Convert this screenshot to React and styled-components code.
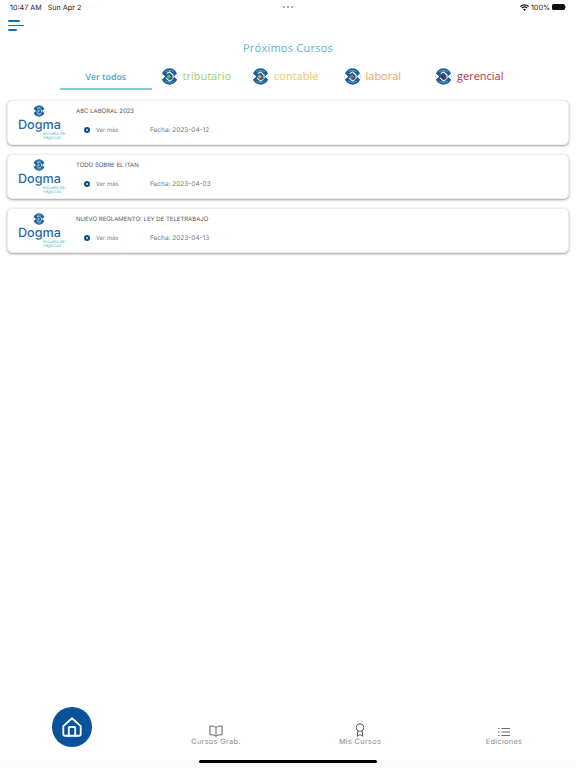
import styled, { createGlobalStyle } from "styled-components";

const courses = [
  { title: "ABC LABORAL 2023", date: "2023-04-12" },
  { title: "TODO SOBRE EL ITAN", date: "2023-04-03" },
  { title: "NUEVO REGLAMENTO: LEY DE TELETRABAJO", date: "2023-04-13" },
];

const brands = [
  { name: "tributario", color: "#a4cf6d", accent: "#7db94a" },
  { name: "contable", color: "#f2c45f", accent: "#e8a93a" },
  { name: "laboral", color: "#f0a365", accent: "#c9663a" },
  { name: "gerencial", color: "#b5334a", accent: "#7e1a3c" },
];

const GlobalStyle = createGlobalStyle`
  html, body {
    margin: 0;
    padding: 0;
    background: #fff;
    font-family: "Open Sans", "Liberation Sans", sans-serif;
    text-rendering: geometricPrecision;
  }
`;

const Page = styled.div`
  width: 576px;
  height: 768px;
  display: flex;
  flex-direction: column;
  overflow: hidden;
  background: #fff;
`;

const StatusBar = styled.div`
  display: grid;
  grid-template-columns: 1fr auto 1fr;
  align-items: center;
  height: 14px;
  padding: 0 10px;
  font-family: "Inter", sans-serif;
  font-size: 7.2px;
  color: #222;
`;

const StatusLeft = styled.div`
  display: flex;
  gap: 6px;
`;

const Dots = styled.div`
  display: flex;
  gap: 2px;
`;

const Dot = styled.span`
  width: 2px;
  height: 2px;
  border-radius: 50%;
  background: #8a8a8a;
`;

const StatusRight = styled.div`
  display: flex;
  align-items: center;
  justify-content: flex-end;
  gap: 2px;
`;

const Battery = styled.span`
  position: relative;
  width: 13px;
  height: 6px;
  border-radius: 1.5px;
  background: #111;
  margin-right: 1px;

  &::after {
    content: "";
    position: absolute;
    right: -1px;
    top: 2px;
    width: 1px;
    height: 2px;
    background: #999;
  }
`;

const TopBar = styled.div`
  height: 20px;
  padding: 6px 0 0 8px;
  box-sizing: border-box;
`;

const MenuButton = styled.div`
  display: flex;
  flex-direction: column;
  align-items: flex-start;
  gap: 3px;
`;

const MenuLine = styled.span`
  display: block;
  height: 1.5px;
  width: ${(p) => p.$w}px;
  background: #1c6ba6;
  border-radius: 1px;
`;

const Title = styled.h1`
  margin: 8px 0 0;
  height: 14px;
  text-align: center;
  font-size: 11px;
  line-height: 14px;
  font-weight: 400;
  letter-spacing: 0.25px;
  color: #55b6d3;
`;

const Tabs = styled.div`
  display: grid;
  grid-template-columns: repeat(5, 91.5px);
  margin: 8px 0 0 60px;
  height: 26px;
`;

const AllTab = styled.div`
  display: flex;
  align-items: center;
  justify-content: center;
  height: 26px;
  box-sizing: border-box;
  padding-top: 1px;
  border-bottom: 2px solid #86c8dc;
  font-size: 8.8px;
  font-weight: 600;
  color: #4aa7c7;
`;

const BrandTab = styled.div`
  display: flex;
  align-items: flex-start;
  padding: 4px 0 0 9px;
  gap: 5px;
  font-size: 11px;
  line-height: 18px;
  color: ${(p) => p.$color};
`;

const List = styled.div`
  display: flex;
  flex-direction: column;
  gap: 9px;
  padding: 10px 7px 0;
`;

const Card = styled.div`
  height: 45px;
  box-sizing: border-box;
  display: flex;
  border-radius: 5px;
  background: #fff;
  border: 1px solid #ececec;
  box-shadow: 0 1px 2.5px rgba(0, 0, 0, 0.38);
`;

const LogoCol = styled.div`
  width: 62px;
  margin-right: 6px;
  flex: none;
  display: flex;
  flex-direction: column;
  align-items: center;
  padding-top: 4px;
  box-sizing: border-box;
`;

const Wordmark = styled.div`
  width: 42px;
  margin-top: 3px;
  font-family: "Inter", sans-serif;
  font-size: 12.6px;
  line-height: 12px;
  font-weight: 500;
  color: #2a6ca3;
`;

const Tagline = styled.div`
  width: 44px;
  padding-left: 26px;
  box-sizing: border-box;
  font-size: 4.4px;
  line-height: 4px;
  color: #53b5cf;
  white-space: nowrap;
`;

const CardBody = styled.div`
  flex: 1;
  display: flex;
  flex-direction: column;
  padding-top: 6px;
`;

const CourseTitle = styled.div`
  font-family: "Inter", sans-serif;
  font-size: 6px;
  line-height: 9px;
  color: #555;
`;

const CardRow = styled.div`
  display: flex;
  align-items: center;
  margin-top: 4px;
`;

const MoreButton = styled.div`
  width: 50px;
  height: 20px;
  box-sizing: border-box;
  padding-left: 8px;
  display: flex;
  align-items: center;
  gap: 6px;
  border-radius: 3px;
  box-shadow: 0 0 3px rgba(0, 0, 0, 0.03);
  font-family: "Inter", sans-serif;
  font-size: 5.8px;
  color: #777;
`;

const PlayDot = styled.span`
  width: 6px;
  height: 6px;
  border-radius: 50%;
  background: #0d4f91;
  display: flex;
  align-items: center;
  justify-content: center;

  &::after {
    content: "";
    width: 2px;
    height: 2px;
    border-radius: 50%;
    background: #cfe0ef;
  }
`;

const DateText = styled.div`
  margin-left: 24px;
  font-family: "Inter", sans-serif;
  font-size: 6.5px;
  color: #777;
`;

const Spacer = styled.div`
  flex: 1;
`;

const BottomNav = styled.nav`
  display: grid;
  grid-template-columns: repeat(4, 144px);
  height: 40px;
  align-items: end;
`;

const HomeSlot = styled.div`
  display: flex;
  justify-content: center;
  align-self: start;
`;

const HomeButton = styled.div`
  width: 40px;
  height: 40px;
  border-radius: 50%;
  background: #0a5299;
  display: flex;
  align-items: center;
  justify-content: center;
`;

const NavItem = styled.div`
  display: flex;
  flex-direction: column;
  align-items: center;
  margin-bottom: 1px;
  font-family: "Inter", sans-serif;
  font-size: 7.4px;
  line-height: 9px;
  letter-spacing: 0.3px;
  color: #8b8b8b;
`;

const HomeBarZone = styled.div`
  height: 8px;
  margin-top: 13px;
  background: #fafafa;
  display: flex;
  justify-content: center;
`;

const HomeIndicator = styled.div`
  width: 178px;
  height: 3px;
  border-radius: 2px;
  background: #000;
`;

const BrandMark = ({ accent, size = 17 }) => (
  <svg width={size} height={size} viewBox="0 0 24 24" fill="none">
    <circle cx="12" cy="12" r="11.5" fill="#1c5f98" />
    <path d="M0.5 7 L6 12 L0.5 17Z M23.5 7 L18 12 L23.5 17Z" fill="#fff" />
    <path d="M6 5 Q12 1.5 18 5" stroke="#7fb0d2" strokeWidth="1" />
    <path d="M6 19 Q12 22.5 18 19" stroke="#7fb0d2" strokeWidth="1" />
    <path d="M8 8 L12 5.5 L17 10 V15 M16 16 L12 18.5 L7 14" stroke="#fff" strokeWidth="1.5" />
    <path d="M11 9 L14 12 L11 15 L8 12Z" fill={accent} />
  </svg>
);

const WifiIcon = () => (
  <svg width="9" height="7" viewBox="0 0 18 14" fill="#111">
    <path d="M9 14 L6 10.6 A4.6 4.6 0 0 1 12 10.6Z" />
    <path d="M4.6 9 L3 7.2 A9 9 0 0 1 15 7.2 L13.4 9 A6.6 6.6 0 0 0 4.6 9Z" />
    <path d="M1.7 5.8 L0 4 A13 13 0 0 1 18 4 L16.3 5.8 A10.6 10.6 0 0 0 1.7 5.8Z" />
  </svg>
);

const HomeIcon = () => (
  <svg width="22" height="22" viewBox="0 0 24 24" fill="none" stroke="#fff" strokeWidth="2" strokeLinejoin="round" strokeLinecap="round">
    <path d="M2.5 11 L12 2.5 L21.5 11 V20 a1.5 1.5 0 0 1 -1.5 1.5 H4 a1.5 1.5 0 0 1 -1.5 -1.5Z" />
    <path d="M8.5 21.5 V13 a1 1 0 0 1 1 -1 h5 a1 1 0 0 1 1 1 V21.5" />
  </svg>
);

const BookIcon = () => (
  <svg width="14" height="12" viewBox="0 0 24 20" fill="none" stroke="#555" strokeWidth="1.6" strokeLinejoin="round">
    <path d="M12 4 C9.5 1.8 6 1.5 1.5 1.5 V16.5 C6 16.5 9.5 16.8 12 19 C14.5 16.8 18 16.5 22.5 16.5 V1.5 C18 1.5 14.5 1.8 12 4Z" />
    <path d="M12 4 V19" />
  </svg>
);

const RibbonIcon = () => (
  <svg width="10" height="14" viewBox="0 0 14 20" fill="none" stroke="#555" strokeWidth="1.4" strokeLinejoin="round">
    <circle cx="7" cy="6.5" r="5.5" />
    <path d="M4 11.5 L3 19 L7 16.5 L11 19 L10 11.5" />
  </svg>
);

const ListIcon = () => (
  <svg width="12" height="10" viewBox="0 0 24 20" fill="none" stroke="#555" strokeWidth="1.8">
    <path d="M7 3 H24 M7 10 H24 M7 17 H24" />
    <path d="M0 3 H3 M0 10 H3 M0 17 H3" />
  </svg>
);

const App = () => {
  return (
    <>
      <GlobalStyle />
      <Page>
        <StatusBar>
          <StatusLeft>
            <span>10:47 AM</span>
            <span>Sun Apr 2</span>
          </StatusLeft>
          <Dots>
            <Dot />
            <Dot />
            <Dot />
          </Dots>
          <StatusRight>
            <WifiIcon />
            <span>100%</span>
            <Battery />
          </StatusRight>
        </StatusBar>
        <TopBar>
          <MenuButton>
            <MenuLine $w={12} />
            <MenuLine $w={16} />
            <MenuLine $w={9} />
          </MenuButton>
        </TopBar>
        <Title>Próximos Cursos</Title>
        <Tabs>
          <AllTab>Ver todos</AllTab>
          {brands.map((b) => (
            <BrandTab key={b.name} $color={b.color}>
              <BrandMark accent={b.accent} />
              {b.name}
            </BrandTab>
          ))}
        </Tabs>
        <List>
          {courses.map((c) => (
            <Card key={c.title}>
              <LogoCol>
                <BrandMark accent="#7fb6d6" size={12} />
                <Wordmark>Dogma</Wordmark>
                <Tagline>
                  escuela de
                  <br />
                  negocios
                </Tagline>
              </LogoCol>
              <CardBody>
                <CourseTitle>{c.title}</CourseTitle>
                <CardRow>
                  <MoreButton>
                    <PlayDot />
                    Ver más
                  </MoreButton>
                  <DateText>Fecha: {c.date}</DateText>
                </CardRow>
              </CardBody>
            </Card>
          ))}
        </List>
        <Spacer />
        <BottomNav>
          <HomeSlot>
            <HomeButton>
              <HomeIcon />
            </HomeButton>
          </HomeSlot>
          <NavItem>
            <BookIcon />
            Cursos Grab.
          </NavItem>
          <NavItem>
            <RibbonIcon />
            Mis Cursos
          </NavItem>
          <NavItem>
            <ListIcon />
            Ediciones
          </NavItem>
        </BottomNav>
        <HomeBarZone>
          <HomeIndicator />
        </HomeBarZone>
      </Page>
    </>
  );
};

export default App;
